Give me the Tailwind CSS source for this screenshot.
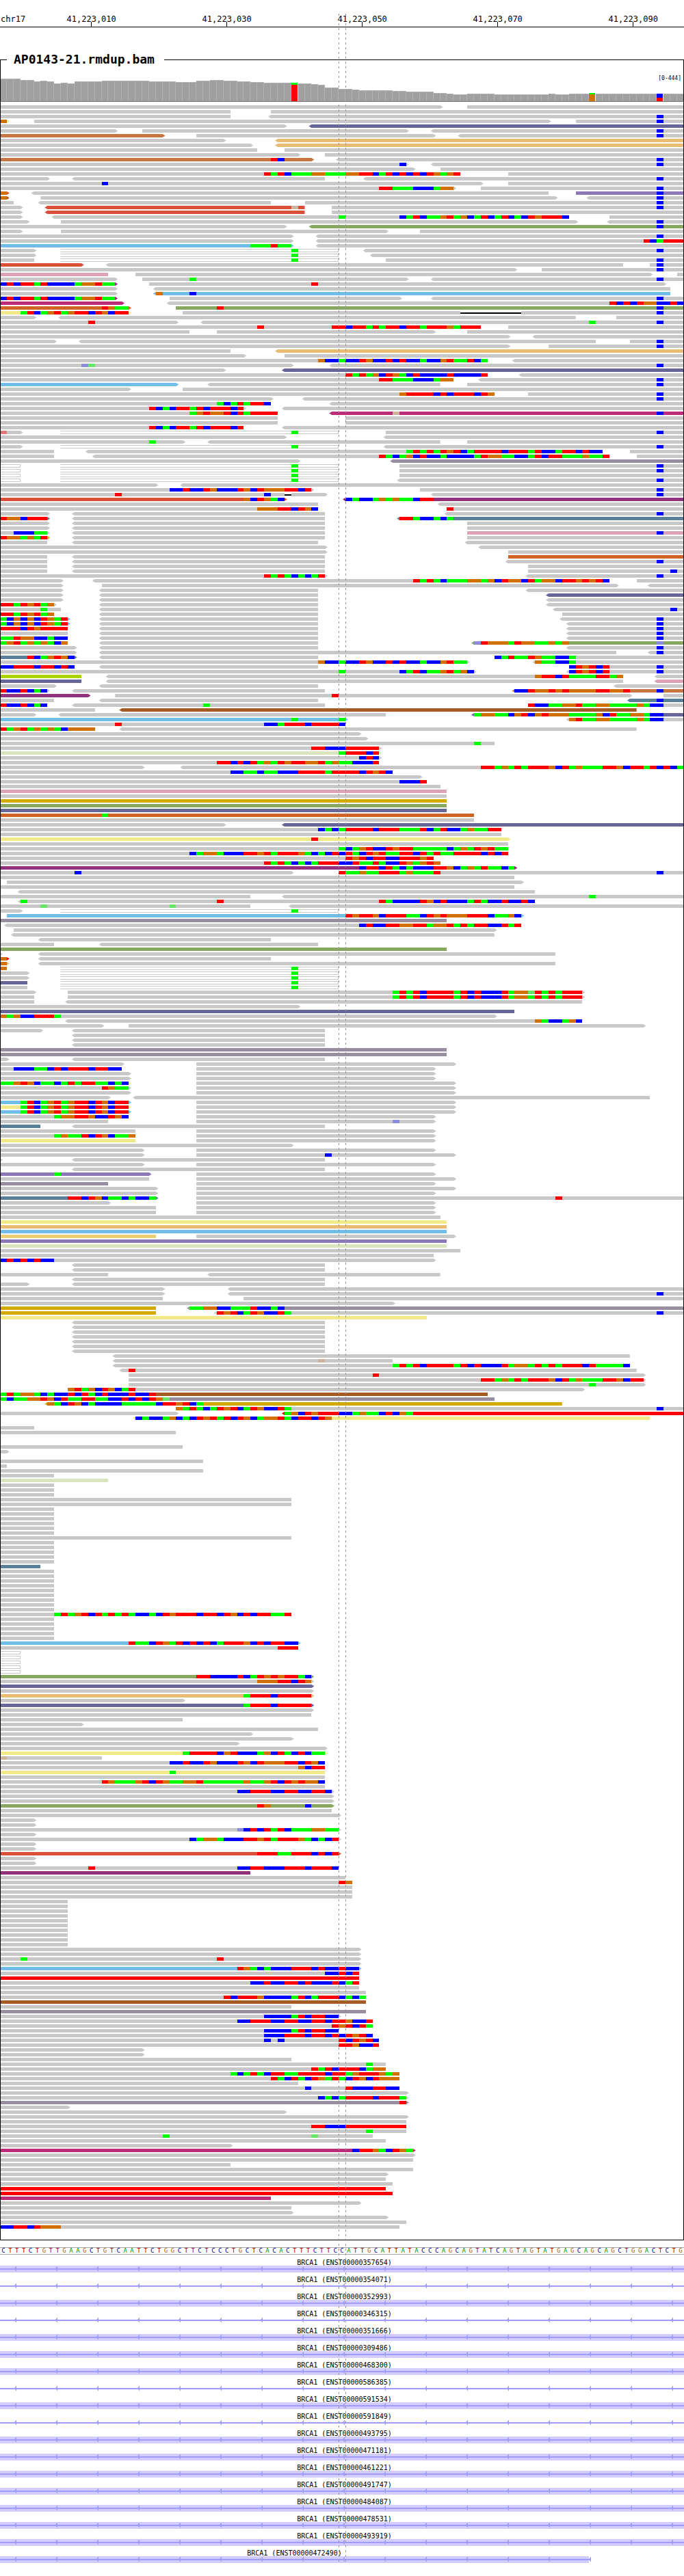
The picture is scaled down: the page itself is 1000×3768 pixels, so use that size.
<!DOCTYPE html>
<html lang="en">
<head>
<meta charset="utf-8">
<title>AP0143-21.rmdup.bam – chr17</title>
<script src="https://cdn.jsdelivr.net/npm/@tailwindcss/browser@4"></script>
</head>
<body class="bg-white text-black font-['DejaVu_Sans_Mono',monospace]">
<main class="relative overflow-hidden pb-[19px]">

  <header id="ruler" class="grid h-[40px] grid-cols-[repeat(101,minmax(0,1fr))] items-end border-b border-black text-[12px] leading-[14px]">
    <span class="col-start-1 row-start-1 mb-1 whitespace-nowrap pl-px">chr17</span>
  </header>

  <fieldset class="mt-[36px] min-w-0 border border-black pb-4">
    <legend class="ml-[9px] pl-[10px] pr-[14px] pb-0.5 text-[18px] leading-[21px] font-bold">AP0143-21.rmdup.bam</legend>
    <div class="overflow-hidden">
      <div class="relative -mx-px">
        <div id="coverage" class="grid h-[50px] grid-cols-[repeat(101,minmax(0,1fr))] items-end border-b border-[#777777]"></div>
        <span class="absolute top-[10px] right-[4px] text-[8px] leading-[11px]">[0-444]</span>
      </div>
      <div id="reads" class="-mx-px flex flex-col gap-[2px] pt-[5px]"></div>
    </div>
  </fieldset>

  <div id="sequence" class="mt-[10px] grid grid-cols-[repeat(101,minmax(0,1fr))] border-y border-[#a8a8a8] text-center text-[9px] leading-[9px]"></div>

  <section id="genes" class="mt-px"></section>

  <div class="pointer-events-none absolute top-[20px] bottom-[20px] left-[calc(100%*50/101)] w-px bg-[repeating-linear-gradient(to_bottom,#969696_0_3px,transparent_3px_7px)]"></div>
  <div class="pointer-events-none absolute top-[20px] bottom-[20px] left-[calc(100%*51/101)] w-px bg-[repeating-linear-gradient(to_bottom,#969696_0_3px,transparent_3px_7px)]"></div>

  <svg class="absolute h-0 w-0" aria-hidden="true">
    <defs>
      <pattern id="strand" width="60" height="10" patternUnits="userSpaceOnUse">
        <path d="M20 5 L23 2 V1 H24 V8 H23 V7 Z" fill="#a09cff"/>
      </pattern>
    </defs>
  </svg>
</main>

<script>
// Reads, one line per row, positions counted in bases from the left edge.
//   12-40   aligned block; "<" or ">" marks the strand tip; a capital names the colour
//   43rgb   mismatching bases starting at 43
//   5x ...  the row is repeated
const rows = `
0-65> 69-101
0-34 40-101
0-34 <40-101 97b
0-1>W 0o 5-81> 85-101 97b
0-42> <46-101N
0-17> 21-60> <64-101 97b
0-24>S 29-64> <68-101 97b
0-33> <41-101Y
0-37> <41-101Y
0-38 42-101
0-44> 48-101
0-46>S 40rb <50-101 97b
0-60> 59b <64-101 97b
0-61> 65-101
0-68 39rgrbgggoogggoorrbgrbrbrbrogor 75-101
0-7> <11-48 <54-101 97b
0-71> 15b 75-101
0-67> 56rrgggbbbgoo 71-101 97b
0-1>R 0o <5-81 85-101V 97b
0-1>B 0o 6-82> <87-101 97b
0-2 <6-40 45-101 97b
0-3> <7-45R 43t 49-101 97b
0-3> <7-45R 49-101
0-3> <8-84 50g 59bgrbggorgobgrbgrbgbrorrrb 90-101
0-4> 9-85> <90-101 97b
0-42> <46-101E 97b
0-3> 9-57> 62-101
0-43> <47-101 97b
0-43> <47-101 95rbgrrr
0-43>L 37gggrgg <47-101
0-5> <9-50H 43g <54-101 97b
0-5> <9-50H 43g <55-101
0-5 <9-50H 43g 57-101 97b
0-12>R <16-92 96-101 97b
0-76> 80-101 97b
0-16K 20-96> 100-101
0-17> 21-60> 28g <64-101 97b
0-17>P 0brbrrgrbbbbgoorgg 22-98> 46r
0-17> <23-99
0-17> <23-99L 23o 28b
0-17>P 0brbrrgrbbbbgoorgg 25-59> <64-101 97b
0-18>M <25-101 90rbrbroobbrb
0-19>O 15rogg 26-101E 32r 97b
0-19>W 3grbgorgorrbrobrr 27-68 68-77Z 77-101 97b
0-5> <9-85 91-101
0-26> 13r <30-101 87g 97b
0-71 38r 49rrbrrgrgrrbrrgrrrogrrr 75-101
0-28 32-64> 69-101
0-75> <79-101
0-8> <12-88 93-101 97b
0-75> 81-101 97b
0-34 <41-101Y
0-36> 42-101
0-72 47obbgbbrobbrbrbbgbborggrbg <76-101
0-43> 12pl <49-101 97b
0-33> <42-101N
0-72 51rgrgobrogbrbbbbrbbbbr <77-101
0-67 56rrgggbbbgoo <71-101 97b
0-26>L <31-65 69-101 97b
0-19> 27-101
0-73 59orrrrbrbrrrbro 78-101 97b
0-40> <45-101 97b
0-40 32gbgrgrrb <49-101
0-36> 22rbgbrrgrbrrrbr <42-101
0-41 28goroorbrgrrrr <49-101M 58t 97b
0-41 51-101
0-41 51-101
0-36 22rbgbrrgrbrrrbr <42-101
0-3> 0s <9-50H 43g 57-101 97b
0-42> <57-101
0-27> 22g <31-65 69-101
0-3> <9-50H 43g <57-101 97b
0-8 <13-89 60grgrgrorbgrrrrbrrrgrbbgrrbrbb 93-101
0-8 <14-90 56rgbgobrbbgbbbbgrooggbbgrbrrgggoggr 94-101
0-44> <58-101U
0-3H <9-50H 43g 59-101 97b
0-3H <9-50H 43g 59-101 97b
0-3H <9-50H 43g 59-101
0-3H <9-50H 43g <59-101 97b
0-23> <27-101
0-46> 25bbrbbrobbbrobrooorrbr 62-101 97b
0-42 42-43Z 43-48> 17r 39b <64-101 97b
0-42>R 36obrogb <51-101P 51bgbbgogoggbrr
0-47 <65-101
0-47 38ooorrbrob 66-101 66r
0-7> <11-48 <66-101 97b
0-7>T 0roobrrr <11-48 <59-101T 59rrgbbgbg
0-7> <11-48 69-101
0-7> <11-48 69-101
0-7> 2bbbgg <11-48 69-101K 97b
0-7>D 0roogogr <11-48 69-101
0-7 <11-47 <69-101
0-48> <71-101
0-48> 75-101
0-7 <11-48 75-101O
0-7 <11-48 <75-101 97b
0-7 <11-48 78-101
0-7 <11-48 78-101 99b
0-48> 39rgrgbgbgr <78-101 97b
0-9> <14-90 61rgrgbgggoogobroobrgoobrrororb 94-101
0-9> 15-91> <96-101
0-9> <15-47 <78-101
0-9> <15-47 <81-101N
0-9> <15-47 <81-101
0-8> 0rrgrorgo <15-47 <81-101
0-9 6g <15-47 <82-101 99b
0-8 0rrgrorgo <15-47 83-101
0-10>L 0gbobobrogr <15-47 <83-101 97b
0-10>L 0gbobobrogr <15-47 <84-101 97b
0-10 0rrrbrorrrr <15-47 <84-101 97b
0-10 <15-47 <84-101 97b
0-10 0ggroobbgbb <15-47 <84-101 97b
0-10 0gorgogogbo <15-47 <70-101E 70prooogrooggogo 97p
0-11> <15-47 <84-101 97b
0-11> <15-91 <96-101 97b
0-11>T 4rbgorob <15-47 73-101 73bgrggroggbbg
0-69> 47obbgbbrobbrbrbbgbborgg <79-101 79oggbbg
0-11 0bbrrrbrrbrb <15-47 84-101 84brorbr 97b
0-70> 50g 59bgrbggorgob <84-101 84brorbr 97b
0-12Q <16-92 79orrbrggggrrgo <97-101
0-12N <16-92 <97-101K
0-8> <15-47 <91-101
0-7> 0rbbrbgb <11-48 <76-101S 76bbroororoooorroor 97b
0-13>P 17-93> 49r 98-101
0-8 <15-47 <93-101T 97b
0-7 0rbbrbgb <11-48 30g 78-101 78rbbggoorggooggggogbb
0-14 <18-94B
0-5> <9-57 <70-101N 70googgborboroooggggobrggoogbb
0-51>L 43g 50g <84-101 84orggooggggogbb
0-51 17r 39bbgrrrbrrrrb
0-14 0rgorgogogboooo <18-94
0-53>
0-54>
0-73 70g
0-56> 46rrbbbrrrrr
0-56>A 50grrrbr
0-56> 53brb
0-56 32rrbrbrgogrorroorgoggbbbr
0-21> <27-101 71rrgogrgrrrobrgogggrrobrrgrbrbg
0-58 34bbggbggbbbrrrrgrrrrbrorb
0-62>
0-63 59bbbr
0-65
0-66K
0-66
0-66D
0-66E
0-66N
0-70O 15g
0-70
0-33> <42-101N
0-74 47bgbgrrrrbrrrgggrbgrbbgoggrr
0-74
0-75>W 46r
0-75
0-75 50gbgorbbrorrgggggbgogrorgg
0-75 28bgoogbbbrrorgrrrogbgbrbrgbrorggrrbrgrggrrrrbrbr
0-64 51rorbrrbbrrror
0-65 39rgrgbgbgrrrbbrggrgbbrogoro
0-76>P 53brrbrgbgbbbrrobgogrggbg
0-43> 11b 50-101 50rggoggrrrgogggr 97b
0-76
1-77>
0-76
<3-79
0-37 <42-101 87g
<3-79 3g 32r 56rgbbbbrobrbbbgrgbbrbbrb
0-37 6l 25l <43-101
0-3> <9-50H 43g
1-77>L 51rorrobrrrggbrorooorrrbggob
0-66U
<1-77 53brbbrroorrgoorgrgrrbbrgr
2-73>
<2-73
<6-40
0-8 <15-47
0-66E
0-0> <6-82
0-1>X 0o <6-40
0-1>Y 0o <6-82
0-1 0o <9-50H 43g
0-4> <9-50H 43g
0-4> <9-50H 43g
0-4N <9-50H 43g
0-4 <9-50H 43g
0-5> 10-86> 58grgrbrrrrgrbrbbbrgoolrgrgrrr
0-5 10-86> 58grgrbrrrrgrbrbbbrgoogrgrgrrr
0-5 <10-86
0-44>
0-76N
0-73> 0ogobbrrrg
<10-86 79ogbbgob
0-15> 19-95>
0-6> <11-48
3x <11-48
2x 0-66U
0-1> <11-48
0-18> 29-67>
0-18 2bbbggbrbrrrbrrbb 29-64>
2x 0-19> 29-64>
0-19>W 0ggorobggbgrgrrggbgb 29-67>
0-19> 15rogg 29-67>
0-19> 29-67>
0-16> <20-96
0-19>L 3grbgorgorrbrobrr 29-67>
0-19>W 3grbgorgorrbrobrr 29-67>
0-19>L 3grbgorgorrbrobrr 29-67>
0-19 8goorrobbrob 29-64>
0-16 29-64> 58p
0-6T <11-48
0-20 29-64>
0-20 8goggrbrobggo 29-64>
0-20W 29-64>
0-43>
0-21> 29-64>
0-21> 29-67> 48b
0-0> <11-48
0-21> 29-64>
<11-48
0-22>V 8g 29-64>
0-22 29-67>
0-16U 29-64>
0-23> 29-67>
0-23> 29-64>
0-23>T 10rrbrobggbgbbg 29-101 82r
0-16> 29-64>
2x 0-23 29-64>
0-65
0-66W
0-66Y
0-66L
0-23F 29-67>
0-66V
0-66A
0-68
0-64
0-64> 0brbrbrbb
2x <11-48
0-16 <31-65
<11-48
0-4> <11-48
0-24> <34-101
0-24> <34-101 97b
0-24 36-101
0-58>
0-23D <28-101U 28ggoobbgggrbbgb
0-23D <32-101 32rorbgrobbrg 97b
0-63W
7x <11-48
<17-93
<17-58 47t
<17-93 58grgrbrrrrgrbrbbbrgoogrgrgrrrbrggggb
<18-94 19r
19-95> 55r
19-95> 71rrgogrgrrrobrgogggrrobrr
19-95> 87g
10-86> 10orgobrobgr
0-72B 0grgoogbgbbrbrgbrbbbrbbr
0-73U 0gbggoorobrggrrggbbrbrbrol
<7-83D 7ogbrobgbbbbgggggbrrorbg
26-101 26ogrgbgrorbgrobbrg 97b
0-26> <42-101X 42gobrorrrbbgoggbrbog
<20-96W 20bgbbgobgbrorgrbrobgoorgbrrbro
.
0-5
0-26
2x .
0-27
0-1>
.
0-30
0-1
0-30
0-8
0-16A
3x 0-8
2x 0-43
6x 0-8
0-43
5x 0-8
0-6T
9x 0-8
0-43 8grgorbrgrgrgbbgbrorrrbrrbrobrbrrggr
5x 0-8
0-44>L 19rggbrogrbrbrbgrrrobrbrrbb
0-44 41rrr
5x 0-3H
0-46>E 29rrbbbbrbgrororrgb
0-46> 38ooorrbro
0-46>N
0-46>
0-46>Y 36grrrbrrrrr
0-27>
0-46>N 36grrrbrrrrr
0-46>
0-46
0-27
0-12>
0-47
0-37>
0-43>
0-35>
0-48>
0-48>W 27grrrrborbbbgobrgbrbgg
0-15 0t
0-48 25bbrbbrobbbrobrooorrbrob
0-48 44obrr
0-48W 25g
0-48
0-48 15rogggorbroggoorggggggoggorbroroob
0-48
0-49> 35bbrrrbbrrbbrrb
2x 0-49>
0-49>E 38ro 45b
0-49
0-50>
2x 0-5>
0-50> 35pbrbrgrbgggoogg
0-5>
0-50> 28bgoogbbbrrorgrrrogbgbr
2x 0-5>
0-50>R 38rrrggrrrbrbr
2x 0-5>
0-50 13r 35bbrrbbbrrrbrrrb
0-37P
0-51
0-52 50ro
3x 0-52
10x 0-10
2x 0-53>
0-53> 3g 32r
0-53>
0-53>L 35rogbgbbbrrrbrbbrbb
0-53 48bbrbr
0-53X
0-53 37bbrbbrrbrbbbrbgr
0-53
0-54
0-54 33rbrrrobbbbgrbgrrrbgbg
0-54B
0-43
0-54U
0-50> 39bbbbgrbrrbb
0-55 35bbrrrbbrrbbrrbrrobbr
0-55 49rorbrg
0-50 39bbbbgrbrrbb
0-55 39bbbrrrbrrbrbrorb
0-56 39b 41b 50rbrorb
0-56 50rrobbr
2x 0-21>
0-43
0-57 54g
0-57 46rgrbrrrbgoo
0-59 34gbgrgbrrggrrrrbrrgorrrogo
0-59 40rgbrgbrogrgbrobrooo
0-44
0-59 45b 51rbbbrrbb
0-60>
0-60> 47bgbgrrrrbrrrg
0-60>U 59r
0-10>
0-42>
0-60>
0-60
0-60 46rrbbbrrrrrrrrr
0-60 54g
0-55 24g 46l
0-57
0-34>
0-61>M 52brrogbrog
0-61>
0-61
0-34
0-61
0-57>
0-57
0-58
0-57X
0-58X
0-40M
0-53>
0-43
0-43>
0-57>
0-60
0-59 0bbrrbrooo`.trim().split('\n');

const readColour = {
  N: 'bg-[#666699]', S: 'bg-[#c87641]', Y: 'bg-[#e8bc72]', V: 'bg-[#8c78b8]', R: 'bg-[#d94f38]',
  E: 'bg-[#88a862]', L: 'bg-[#70bee8]', K: 'bg-[#dca3b4]', M: 'bg-[#bc2c7a]', O: 'bg-[#d06426]',
  W: 'bg-[#f2ea8a]', P: 'bg-[#92307e]', U: 'bg-[#988ea0]', T: 'bg-[#5a7f99]', Q: 'bg-[#aad400]',
  B: 'bg-[#a65a24]', D: 'bg-[#d2aa00]', A: 'bg-[#dae4bf]', F: 'bg-[#ecce74]', X: 'bg-[#ff0000]',
  H: 'bg-white border-y border-r border-[#c8c8c8]', Z: 'bg-black'
};
const baseColour = {
  r: 'bg-[#ff0000]', g: 'bg-[#00ff00]', b: 'bg-[#0000ff]', o: 'bg-[#d17105]',
  p: 'bg-[#8c8cdc]', l: 'bg-[#66e566]', t: 'bg-[#ccb49c]', s: 'bg-[#e07878]'
};
const tipRight = '-mr-1 [clip-path:polygon(0_0,calc(100%-4px)_0,100%_50%,calc(100%-4px)_100%,0_100%)]';
const tipLeft = '-ml-1 [clip-path:polygon(4px_0,100%_0,100%_100%,4px_100%,0_50%)]';
const cell = (cls, a, b) => `<i class="row-start-1 ${cls}" style="grid-column:${a + 1}/${b + 1}"></i>`;

function drawRow(line) {
  let html = '';
  for (const token of line.split(' ')) {
    let m;
    if ((m = token.match(/^(<?)(\d+)-(\d+)(>?)([A-Z]?)$/))) {
      const a = +m[2], b = +m[3];
      let cls = m[5] ? readColour[m[5]] : 'bg-[#c8c8c8]';
      cls += m[5] === 'Z' ? ' mt-0.5 h-0.5' : ' h-[5px]';
      if (m[1]) cls += ' ' + tipLeft;
      if (m[4]) cls += ' ' + tipRight;
      html += a === b ? cell(cls + ' w-1', a, a + 1) : cell(cls, a, b);
    } else if ((m = token.match(/^(\d+)([a-z]+)$/))) {
      // "relative" keeps mismatches above the clipped read bodies
      let at = +m[1];
      for (const run of m[2].match(/(.)\1*/g)) {
        html += cell('relative h-[5px] ' + baseColour[run[0]], at, at + run.length);
        at += run.length;
      }
    }
  }
  return `<div class="grid h-[5px] grid-cols-[repeat(101,minmax(0,1fr))]">${html}</div>`;
}
document.getElementById('reads').innerHTML = rows.map(line => {
  const m = line.match(/^(\d+)x (.*)$/);
  return m ? drawRow(m[2]).repeat(+m[1]) : drawRow(line);
}).join('');

// Coverage heights in pixels as [height, number of bases]
const depth = [[33,3],[31,2],[29,1],[30,1],[29,1],[26,1],[27,1],[26,1],[29,4],[30,7],[29,4],[28,3],[30,2],[31,2],[30,2],[29,2],[28,2],[27,5],[26,2],[25,1],[24,1],[20,2],[18,2],[17,1],[16,5],[15,2],[14,4],[12,2],[11,1],[10,2],[11,4],[10,8],[11,1],[10,2],[11,3],[12,1],[11,13]];
const variants = {
  43: '<i class="h-[3px] bg-[#00ff00]"></i><i class="grow bg-[#ff0000]"></i>',
  87: '<i class="h-[2px] bg-[#00ff00]"></i><i class="grow bg-[#d17105]"></i>',
  97: '<i class="h-[6px] bg-[#0000ff]"></i><i class="grow bg-[#ff0000]"></i>'
};
document.getElementById('coverage').innerHTML = depth.flatMap(([h, n]) => Array(n).fill(h)).map((h, i) =>
  variants[i]
    ? `<div class="mr-px flex flex-col" style="height:${h}px">${variants[i]}</div>`
    : `<div class="border-t border-r border-[#b2b2b2] bg-[#a0a0a0]" style="height:${h}px"></div>`
).join('');

// Ruler ticks
document.getElementById('ruler').innerHTML += [10, 30, 50, 70, 90].map(n =>
  `<div class="row-start-1 flex flex-col items-center" style="grid-column:${n + 4}"><span class="-mb-[3px]">41,223,0${n}</span><i class="h-[7px] w-px bg-black"></i></div>`
).join('');

// Reference bases
const letterColour = { A: 'text-[#009600]', C: 'text-[#00008c]', G: 'text-[#a86010]', T: 'text-[#a00000]' };
document.getElementById('sequence').innerHTML = [...'CTTTCTGTTGAAGCTGTCAATTCTGGCTTCTCCCTGCTCACACTTTCTTCCATTGCATTATACCCAGCAGTATCAGTAGTATGAGCAGCAGCTGGACTCTG'].map(c =>
  `<span class="${letterColour[c]}">${c}</span>`
).join('');

// Transcripts: id, exon in view, share of the width covered
const transcripts = [
  ['357654', 1, 100], ['354071', 0, 100], ['352993', 1, 100], ['346315', 0, 100], ['351666', 1, 100],
  ['309486', 1, 100], ['468300', 1, 100], ['586385', 0, 100], ['591534', 1, 100], ['591849', 0, 100],
  ['493795', 1, 100], ['471181', 1, 100], ['461221', 1, 100], ['491747', 1, 100], ['484087', 1, 100],
  ['478531', 1, 100], ['493919', 1, 100], ['472490', 1, 86.1]
];
document.getElementById('genes').innerHTML = transcripts.map(([id, exon, w]) =>
  `<div class="h-[25px]">
    <div class="h-[15px] text-center text-[10px] leading-[22px] ${w === 100 ? 'pl-[7px]' : ''}" style="width:${w}%">BRCA1 (ENST00000${id})</div>
    <svg class="block h-[10px] w-full" aria-hidden="true">
      ${exon ? `<rect width="${w}%" height="10" fill="#d2ccff"/>` : ''}
      <rect y="4" width="${w}%" height="2" fill="#a09cff"/>
      <rect width="${w + 0.3}%" height="10" fill="url(#strand)"/>
    </svg>
  </div>`
).join('');
</script>
</body>
</html>
